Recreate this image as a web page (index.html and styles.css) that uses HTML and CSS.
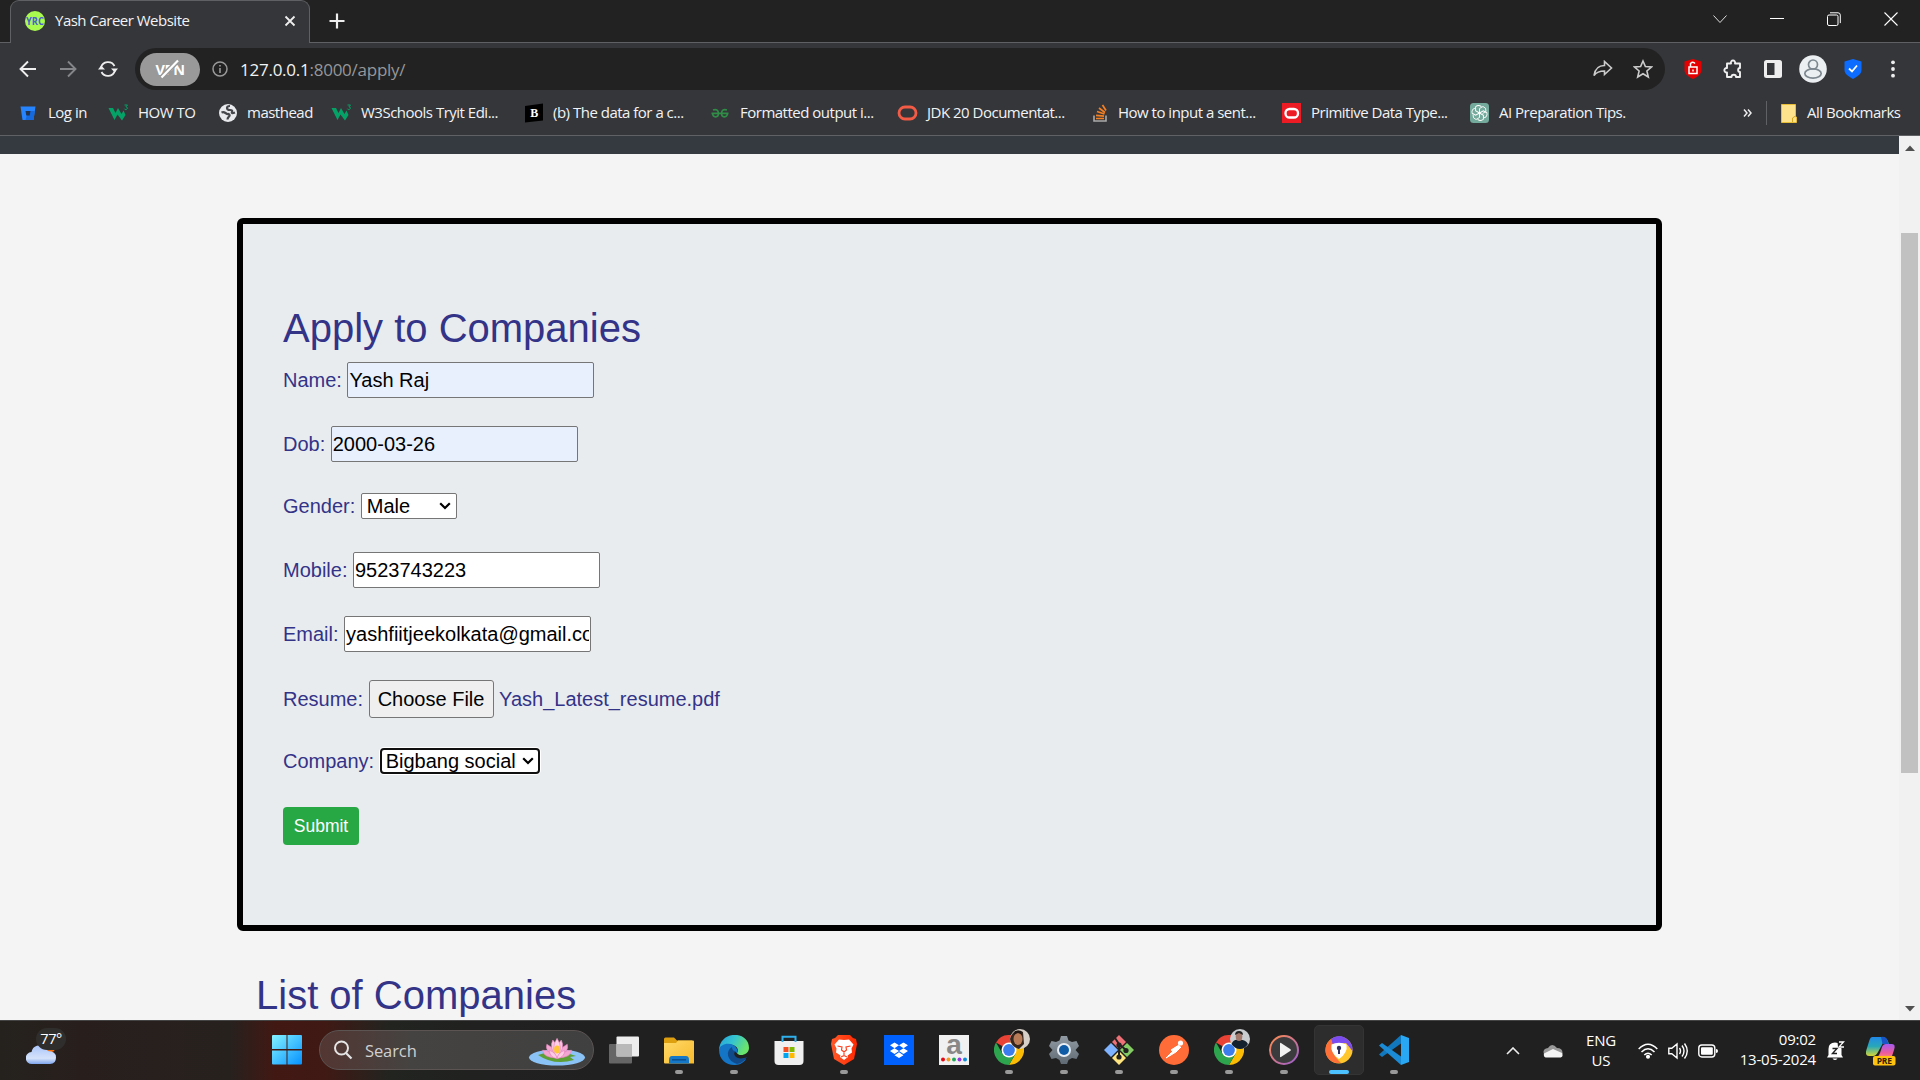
FILE: index.html
```html
<!DOCTYPE html>
<html lang="en">
<head>
<meta charset="utf-8">
<title>Yash Career Website</title>
<link rel="stylesheet" href="styles.css">
</head>
<body>
<svg class="defs" width="0" height="0">
  <defs>
    <linearGradient id="win" x1="0" y1="0" x2="1" y2="1"><stop offset="0" stop-color="#84f3ff"/><stop offset="1" stop-color="#0591ff"/></linearGradient>
    <linearGradient id="cloud" x1="0" y1="0" x2="0" y2="1"><stop offset="0" stop-color="#a9c5fa"/><stop offset=".7" stop-color="#d5e2fa"/><stop offset="1" stop-color="#7ea6ee"/></linearGradient>
    <linearGradient id="folder" x1="0" y1="0" x2="1" y2="1"><stop offset="0" stop-color="#ffd968"/><stop offset="1" stop-color="#f8ba2c"/></linearGradient>
    <linearGradient id="edge" x1="0" y1="0" x2="1" y2=".4"><stop offset="0" stop-color="#249fde"/><stop offset=".5" stop-color="#35c4d0"/><stop offset="1" stop-color="#6be46c"/></linearGradient>
    <linearGradient id="brave" x1="0" y1="0" x2="1" y2="0"><stop offset="0" stop-color="#ff5a2a"/><stop offset="1" stop-color="#ff2800"/></linearGradient>
    <linearGradient id="player" x1="0" y1="0" x2="1" y2="1"><stop offset="0" stop-color="#ff8c4c"/><stop offset="1" stop-color="#9a5ed0"/></linearGradient>
    <linearGradient id="gear" x1="0" y1="0" x2="0" y2="1"><stop offset="0" stop-color="#929ba3"/><stop offset="1" stop-color="#5f6a74"/></linearGradient>
    <linearGradient id="copA" x1="0" y1="0" x2="0" y2="1"><stop offset="0" stop-color="#2189e8"/><stop offset=".5" stop-color="#29a8b8"/><stop offset="1" stop-color="#d6d636"/></linearGradient>
    <linearGradient id="copB" x1="0" y1="0" x2="0" y2="1"><stop offset="0" stop-color="#a55bf0"/><stop offset=".6" stop-color="#ee5b9d"/><stop offset="1" stop-color="#ff9a60"/></linearGradient>
    <symbol id="w3" viewBox="0 0 20 20">
      <path d="M.5 5H5l2.500 5L10 5l3.500 6 2-3.500L17.500 12 14 17.500l-4.500-6-3 5.500z" fill="#04a267"/>
      <path d="M16.500 2h3l-1.600 1.800c2 0 2 2.700-.1 2.700-.8 0-1.300-.3-1.400-.8" fill="none" stroke="#04a267"/>
    </symbol>
    <symbol id="chrome" viewBox="0 0 30 30">
      <path d="M15 15L2 7.500A15 15 0 0 1 28 7.500H15z" fill="#ea4335"/>
      <path d="M15 7.500h13A15 15 0 0 1 15 30l6.500-11.300z" fill="#fbbc05"/>
      <path d="M2 7.500A15 15 0 0 0 15 30l6.500-11.300L8.500 18.700z" fill="#2da44e"/>
      <circle cx="15" cy="15" r="7.500" fill="#fff"/><circle cx="15" cy="15" r="5.900" fill="#3b7ded"/>
    </symbol>
  </defs>
</svg>
<div class="screen">
  <header class="browser">
    <div class="tabstrip">
      <div class="tab">
        <svg class="favicon" width="20" height="20" viewBox="0 0 20 20"><circle cx="10" cy="10" r="10" fill="#a9fb4f"/><text x="1" y="14" textLength="18" lengthAdjust="spacingAndGlyphs" font-size="11" font-weight="bold" fill="#4a5ed0">YRC</text></svg>
        <span class="tab-title">Yash Career Website</span>
        <svg width="12" height="12" viewBox="0 0 12 12"><path d="M1.500 1.500l9 9M10.500 1.500l-9 9" stroke="#eee" stroke-width="1.800"/></svg>
      </div>
      <svg class="newtab" width="16" height="16" viewBox="0 0 16 16"><path d="M8 .5v15M.5 8h15" stroke="#eee" stroke-width="2.200"/></svg>
      <div class="window-buttons">
        <svg width="14" height="14" viewBox="0 0 14 14"><path d="M.5 3.500L7 10.500l6.500-7" fill="none" stroke="#ddd"/></svg>
        <svg width="14" height="14" viewBox="0 0 14 14"><path d="M0 6.500h14" stroke="#fff"/></svg>
        <svg width="14" height="14" viewBox="0 0 14 14" fill="none" stroke="#fff"><rect x=".5" y="3" width="10.500" height="10.500" rx="1.500"/><path d="M3 .8h8q2.300 0 2.300 2.300v8" /></svg>
        <svg width="14" height="14" viewBox="0 0 14 14"><path d="M.5.5l13 13M13.500.5l-13 13" stroke="#fff" stroke-width="1.100"/></svg>
      </div>
    </div>
    <div class="toolbar">
      <div class="nav">
        <svg width="18" height="18" viewBox="0 0 18 18" fill="none" stroke="#eee" stroke-width="1.900"><path d="M17 9H2M9 1.500L1.500 9 9 16.500"/></svg>
        <svg width="18" height="18" viewBox="0 0 18 18" fill="none" stroke="#85868a" stroke-width="1.900"><path d="M1 9h15M9 1.500L16.500 9 9 16.500"/></svg>
        <svg width="20" height="18" viewBox="0 0 20 18"><path d="M3 7.500A7.300 7.300 0 0 1 16.500 6M17 10.500A7.300 7.300 0 0 1 3.500 12" fill="none" stroke="#eee" stroke-width="1.800"/><path d="M13 8.500h7l-3.200 4zM0 9.500h7L3.200 5.500z" fill="#eee"/></svg>
      </div>
      <div class="address">
        <div class="vpn"><span>VPN</span><svg class="slash" width="24" height="20" viewBox="0 0 24 20"><path d="M3.500 18.500L20 1.500" stroke="#999" stroke-width="5"/><path d="M3.500 18.500L20 1.500" stroke="#fff" stroke-width="2.200"/></svg></div>
        <svg class="info" width="16" height="16" viewBox="0 0 16 16"><circle cx="8" cy="8" r="7" fill="none" stroke="#999" stroke-width="1.500"/><path d="M8 7v5M8 4v1.500" stroke="#999" stroke-width="1.600"/></svg>
        <span class="url">127.0.0.1<i>:8000/apply/</i></span>
        <svg class="share" width="20" height="18" viewBox="0 0 20 18"><path d="M1 15.500C2 9 6 5.500 11.500 5.500V1.500L18.500 8l-7 6.500V11C7 11 3.500 12 1 15.500z" fill="none" stroke="#ccc" stroke-width="1.600"/></svg>
        <svg width="20" height="20" viewBox="0 0 20 20"><path d="M10 2l2.400 5.500 6 .5-4.500 4 1.400 6-5.300-3.200L4.700 18l1.400-6L1.600 8l6-.5z" fill="none" stroke="#ccc" stroke-width="1.600"/></svg>
      </div>
      <div class="extensions">
        <svg width="18" height="20" viewBox="0 0 18 20"><path d="M9 0l8.500 2.500V11c0 4-4 7-8.500 9C4.500 18 .5 15 .5 11V2.500z" fill="#e40000"/><rect x="5" y="8" width="8" height="6.500" fill="none" stroke="#fff" stroke-width="1.500"/><path d="M6.500 8V4.500q2.500-2.500 4.500 0M9 10.500V12.500" fill="none" stroke="#fff" stroke-width="1.500"/></svg>
        <svg width="20" height="20" viewBox="0 0 20 20"><path d="M4 4.500h4C7 .5 13 .5 12 4.500h5V9c-2.500 0-2.500 4 0 4v5h-4c0-3-4.500-3-4.500 0H4v-4.500C.5 14 .5 8.500 4 9z" fill="none" stroke="#f0f0f0" stroke-width="1.900" stroke-linejoin="round"/></svg>
        <svg width="18" height="18" viewBox="0 0 18 18"><rect width="18" height="18" rx="2.500" fill="#eee"/><rect x="3" y="3" width="7.500" height="12" fill="#35363a"/></svg>
        <svg width="28" height="28" viewBox="0 0 28 28"><circle cx="14" cy="14" r="13.800" fill="#eceff1"/><circle cx="14" cy="9.500" r="4.500" fill="none" stroke="#7c8790" stroke-width="1.700"/><ellipse cx="14" cy="18.500" rx="8.200" ry="4.600" fill="none" stroke="#7c8790" stroke-width="1.700"/></svg>
        <svg width="18" height="20" viewBox="0 0 18 20"><path d="M9 0l8.500 2.500V11c0 4-4 6.500-8.500 9C4.500 17.500.5 15 .5 11V2.500z" fill="#0b6cff"/><path d="M5 9.500L8 12.500 13 6.500" fill="none" stroke="#fff" stroke-width="1.800"/></svg>
        <svg width="4" height="18" viewBox="0 0 4 18" fill="#eee"><circle cx="2" cy="2.300" r="1.900"/><circle cx="2" cy="9" r="1.900"/><circle cx="2" cy="15.700" r="1.900"/></svg>
      </div>
    </div>
    <div class="bookmarks">
      <div class="bm"><svg width="20" height="20" viewBox="0 0 20 20"><path d="M2.500 3.500h15L15.500 17h-11z" fill="#2684ff"/><path d="M10 8h6.800L15.500 17h-8z" fill="#1668dd"/><path d="M7.500 8h5l-.8 4.500H8.300z" fill="#23334d"/></svg><span>Log in</span></div>
      <div class="bm"><svg width="20" height="20"><use href="#w3"/></svg><span>HOW TO</span></div>
      <div class="bm"><svg width="20" height="20" viewBox="0 0 20 20"><circle cx="11" cy="10" r="9" fill="#e8eaed"/><path d="M4.500 9.500q2-1 4 .5t3 1q2 1 .5 2.500t-1.500 3M13 3q-3 0-3 2t3 2 2 2 3 .5" fill="none" stroke="#45474c" stroke-width="2.200"/></svg><span>masthead</span></div>
      <div class="bm"><svg width="20" height="20"><use href="#w3"/></svg><span>W3Schools Tryit Edi...</span></div>
      <div class="bm"><svg width="20" height="20" viewBox="0 0 20 20"><path d="M2 3l18-2.500v17L2 19.500z" fill="#000"/><text x="11" y="14.200" text-anchor="middle" class="serif-b" fill="#fff">B</text></svg><span>(b) The data for a c...</span></div>
      <div class="bm"><svg width="20" height="20" viewBox="0 0 20 20" fill="none" stroke="#2f8d46" stroke-width="1.700"><path d="M1.500 10.300h17M3 7q5-1.500 5.500 3c0 5-5.500 5-6 .5M17 7q-5-1.500-5.500 3c0 5 5.500 5 6 .5"/></svg><span>Formatted output i...</span></div>
      <div class="bm"><svg width="22" height="20" viewBox="0 0 22 20"><rect x="3" y="4" width="17" height="12" rx="6" fill="none" stroke="#f25b45" stroke-width="2.800"/></svg><span class="near">JDK 20 Documentat...</span></div>
      <div class="bm"><svg width="20" height="20" viewBox="0 0 20 20" fill="none"><path d="M6 12.500V18h12v-5.500" stroke="#aaa" stroke-width="1.600"/><path d="M8 15.500h8M8 12.300l8 .9M9 8.500l7.500 2.500M11 5l6 4.500M14.500 2l3.500 5.500" stroke="#f48024" stroke-width="1.700"/></svg><span>How to input a sent...</span></div>
      <div class="bm"><svg width="20" height="20" viewBox="0 0 20 20"><rect x="1" width="19" height="20" fill="#ed1c24"/><rect x="4.500" y="6" width="12.500" height="8.500" rx="4" fill="none" stroke="#fff" stroke-width="2.300"/></svg><span>Primitive Data Type...</span></div>
      <div class="bm"><svg width="20" height="20" viewBox="0 0 20 20"><rect x="1" width="19" height="20" rx="3.500" fill="#74aa9c"/><g fill="none" stroke="#fff" stroke-width=".9"><path id="petal" d="M10.500 10V5.500L14 3.500q3.500 1 3 5L13.500 10.500"/><path d="M10.500 10V5.500L14 3.500q3.500 1 3 5" transform="rotate(60 10.500 10)"/><path d="M10.500 10V5.500L14 3.500q3.500 1 3 5" transform="rotate(120 10.500 10)"/><path d="M10.500 10V5.500L14 3.500q3.500 1 3 5" transform="rotate(180 10.500 10)"/><path d="M10.500 10V5.500L14 3.500q3.500 1 3 5" transform="rotate(240 10.500 10)"/><path d="M10.500 10V5.500L14 3.500q3.500 1 3 5" transform="rotate(300 10.500 10)"/></g></svg><span>AI Preparation Tips.</span></div>
      <div class="more"><svg width="9" height="8" viewBox="0 0 9 8"><path d="M1 .5L4 4 1 7.500M5 .5L8 4 5 7.500" fill="none" stroke="#eee" stroke-width="1.500"/></svg></div>
      <div class="bm all"><svg width="16" height="19" viewBox="0 0 16 19"><path d="M.5.5h14V13h1v5.500H.5z" fill="#ffe38c" stroke="#e8bd38"/><path d="M11.500 18v-4l3-2" fill="none" stroke="#d8a81e"/></svg><span>All Bookmarks</span></div>
    </div>
  </header>

  <div class="viewport">
    <main class="page">
      <div class="navbar"></div>
      <section class="jumbotron">
        <h2>Apply to Companies</h2>
        <form class="form">
          <div class="row"><label>Name:</label><input class="auto" value="Yash Raj"></div>
          <div class="row"><label>Dob:</label><input class="auto" value="2000-03-26"></div>
          <div class="row short"><label>Gender:</label><span class="select gender">Male<svg width="12" height="8" viewBox="0 0 12 8"><path d="M1.200 1.200L6 6l4.800-4.800" fill="none" stroke="#000" stroke-width="2.200"/></svg></span></div>
          <div class="row"><label>Mobile:</label><input value="9523743223"></div>
          <div class="row"><label>Email:</label><input value="yashfiitjeekolkata@gmail.com"></div>
          <div class="row tall"><label>Resume:</label><button type="button" class="choose">Choose File</button><span>Yash_Latest_resume.pdf</span></div>
          <div class="row short"><label>Company:</label><span class="select company">Bigbang social<svg width="12" height="8" viewBox="0 0 12 8"><path d="M1.200 1.200L6 6l4.800-4.800" fill="none" stroke="#000" stroke-width="2.200"/></svg></span></div>
          <button type="button" class="submit">Submit</button>
        </form>
      </section>
      <h2 class="list-title">List of Companies</h2>
    </main>
    <div class="scrollbar">
      <svg width="10" height="6" viewBox="0 0 10 6"><path d="M0 6l5-5.500L10 6z" fill="#505050"/></svg>
      <div class="thumb"></div>
      <svg width="10" height="6" viewBox="0 0 10 6"><path d="M0 0l5 5.500L10 0z" fill="#505050"/></svg>
    </div>
  </div>

  <footer class="taskbar">
    <div class="weather">
      <svg width="30" height="22" viewBox="0 0 30 22"><circle cx="25" cy="5" r="4" fill="#f76b0a"/><path d="M6 21a6 6 0 0 1-.5-12A8 8 0 0 1 19 4.500q2.500 1 3 3.500 8 0 8 6.500 0 6.500-6 6.500z" fill="url(#cloud)"/></svg>
      <span class="temp">77°</span>
    </div>
    <svg class="start" width="30" height="30" viewBox="0 0 30 30"><path d="M0 1q0-1 1-1h13.500v14H0zM15.500 0H29q1 0 1 1v13H15.500zM0 15.500h14.500v14H1q-1 0-1-1zM15.500 15.500H30v13q0 1-1 1H15.500z" fill="url(#win)"/></svg>
    <div class="search">
      <svg width="20" height="20" viewBox="0 0 20 20"><circle cx="8.500" cy="8" r="6.500" fill="none" stroke="#e5e5e5" stroke-width="2"/><path d="M13 13l5.500 5.500" stroke="#e5e5e5" stroke-width="2.200"/></svg>
      <span>Search</span>
      <svg class="lotus" width="58" height="32" viewBox="0 0 58 32"><ellipse cx="29" cy="23.500" rx="28" ry="8" fill="#8cc3f7"/><path d="M10 21q18-7 38 1l-6 1 4 3q-20 6-36-5z" fill="#5d9e35"/><g transform="translate(4.400 3.500) scale(.85)" fill="#f3a6d2" stroke="#e684bd" stroke-width=".7"><path d="M29 24Q13 24 12 15q10 0 17 9zM29 24Q45 24 46 15q-10 0-17 9zM29 24Q14 17 17 8q10 5 12 16zM29 24Q44 17 41 8q-10 5-12 16z"/><path d="M29 24Q19 12 24 3q6 5 5 21zM29 24Q39 12 34 3q-6 5-5 21z" fill="#fac4e0"/><path d="M29 24Q21 13 29 1q8 12 0 23z" fill="#ffd0e6"/><path d="M29 25Q20 23 20 15q8 3 9 10zM29 25Q38 23 38 15q-8 3-9 10z" fill="#ffcae3"/></g><ellipse cx="29" cy="15.500" rx="3" ry="4" fill="#ffc63c"/></svg>
    </div>
    <div class="apps">
      <div class="app"><svg width="30" height="30" viewBox="0 0 30 30"><rect x="0" y="9" width="23" height="19.500" rx="1" fill="#666"/><rect x="7.500" y="1.500" width="22.500" height="20" rx="1" fill="#eee"/><path d="M7.500 9H23v12.500H7.500z" fill="#b9b9b9"/></svg></div>
      <div class="app on"><svg width="30" height="30" viewBox="0 0 30 30"><path d="M0 4q0-1.500 1.500-1.500H10l3 3h15V15H0z" fill="#dfa010"/><path d="M0 8h12l2-2.500h15q1 0 1 1v22H1q-1 0-1-1z" fill="url(#folder)"/><path d="M5 28.500V25q0-4 3-4h14q3 0 3 4v3.500z" fill="#1678c9"/><path d="M8 24.800h14" stroke="#0b4f91" stroke-width="1.500"/></svg></div>
      <div class="app on"><svg width="30" height="30" viewBox="0 0 30 30"><path d="M0 16C0-5 30-5 30 13c0 7-10 9-12 5 3-4-2-9-8-8C4 11 1 13 0 16z" fill="url(#edge)"/><path d="M0 15c1-7 14-9 18-1 2 4-1 5-2 2-4 5 2 10 8 9l3-1c-3 5-8 6-12 6C7 30 0 24 0 15z" fill="#1474c6"/><path d="M13 12c-7 4-5 14 5 17 5-1 8-4 10-7-9 4-15-1-12-6-2 0-3-2-3-4z" fill="#114a8b"/></svg></div>
      <div class="app"><svg width="30" height="30" viewBox="0 0 30 30"><path d="M.5 6h29v20q0 4-4 4h-21q-4 0-4-4z" fill="#f0f0f0"/><path d="M8.500 7V1.800h13V7" fill="none" stroke="#2fb0ec" stroke-width="2"/><path d="M9.500 12h5v5h-5z" fill="#f25022"/><path d="M15.500 12h5v5h-5z" fill="#7fba00"/><path d="M9.500 18h5v5h-5z" fill="#00a4ef"/><path d="M15.500 18h5v5h-5z" fill="#ffb900"/></svg></div>
      <div class="app on"><svg width="30" height="30" viewBox="0 0 30 30"><path d="M9 0h12l3 3 3 1 1 5-3 15-10 6-10-6L2 9l1-5 3-1z" fill="url(#brave)"/><path d="M10 4.500l5 .5 5-.5 4.500 5-2 4 .5 4-4.500 3 .5 1.500-4 3-4-3 .5-1.500L7 17.500l.5-4-2-4z" fill="#fff"/><path d="M8.500 11l4.500 1-.5 3 2.500 2 2.500-2-.5-3 4.500-1M15 17v3.500M12 22l3-1.500 3 1.500" fill="none" stroke="#ff4120" stroke-width="1.200"/></svg></div>
      <div class="app"><svg width="30" height="30" viewBox="0 0 30 30"><path d="M0 0h30v30H0z" fill="#0061fe"/><path d="M10.500 7.500L15 10.300l-4.500 2.900L6 10.300zM19.500 7.500l4.500 2.800-4.500 2.900-4.500-2.900zM10.500 13.200L15 16l-4.500 2.900L6 16zM19.500 13.200L24 16l-4.500 2.900L15 16zM15 17.300l4.500 2.900L15 23l-4.500-2.800z" fill="#fff"/></svg></div>
      <div class="app"><svg width="30" height="30" viewBox="0 0 30 30"><path d="M0 0h30v30H0z" fill="#f1f1f1"/><text x="15" y="18.500" text-anchor="middle" class="amazon">a</text><circle cx="4" cy="24.500" r="2" fill="#e50914"/><circle cx="9.500" cy="24.500" r="2" fill="#f49b20"/><circle cx="15" cy="24.500" r="2" fill="#21a75a"/><circle cx="20.500" cy="24.500" r="2" fill="#9238df"/><circle cx="26" cy="24.500" r="2" fill="#0f8dd9"/></svg></div>
      <div class="app on"><svg width="30" height="30"><use href="#chrome"/></svg><svg class="avatar" width="20" height="20" viewBox="0 0 20 20"><circle cx="10" cy="10" r="10" fill="#d6d0c8"/><path d="M1 7Q6-2 13 3l1 12-5 5Q1 18 0 10z" fill="#35261e"/><ellipse cx="8" cy="10" rx="4.500" ry="6" fill="#b87b58"/><path d="M4 6q4-4 8 0l-1-4H5z" fill="#1d1613"/></svg></div>
      <div class="app on"><svg width="30" height="30" viewBox="0 0 30 30"><path d="M12 1h6l1.500 4.500L23 7l4.500-1 2.500 5-3.500 4 3.500 4-2.500 5-4.500-1-3.500 2L18 29h-6l-1.500-4L7 23l-4.500 1L0 19l3.500-4L0 11l2.500-5L7 7l3.500-1.500z" fill="url(#gear)"/><circle cx="15" cy="15" r="7" fill="#e8eef4"/><circle cx="15" cy="15" r="5" fill="#0f5ba5"/></svg></div>
      <div class="app on"><svg width="30" height="30" viewBox="0 0 30 30"><path d="M15 0l7 7-7 7-7-7z" fill="#ee7177"/><path d="M23 8l7 7-7 7-7-7z" fill="#83cc64"/><path d="M7 8l7 7-7 7-7-7z" fill="#80b3ff"/><path d="M15 16l7 7-7 7-7-7z" fill="#ffe57f"/><path d="M11 3l4 6v14M15 9l7 6" fill="none" stroke="#222" stroke-width="2"/><circle cx="15" cy="10" r="2.600" fill="#222"/><circle cx="22" cy="15.500" r="2.600" fill="#222"/><circle cx="15" cy="22" r="2.600" fill="#222"/></svg></div>
      <div class="app on"><svg width="30" height="30" viewBox="0 0 30 30"><circle cx="15" cy="15" r="15" fill="#ff6c37"/><circle cx="21.500" cy="8" r="2.600" fill="#fff"/><path d="M20 10l-8 5 2 1-7 7 10-6 5-5M16 12l3 3" fill="#fff" stroke="#fff" stroke-width="1"/></svg></div>
      <div class="app on"><svg width="30" height="30"><use href="#chrome"/></svg><svg class="avatar" width="20" height="20" viewBox="0 0 20 20"><circle cx="10" cy="10" r="10" fill="#c9cdd0"/><path d="M1.500 15Q4 10 8 11q7-1 10 4-3 5-8 5t-8.500-5z" fill="#15202f"/><ellipse cx="9" cy="7.500" rx="3.300" ry="4.500" fill="#a2786a"/><path d="M5 6q0-4 4-4t4 4l-4-2z" fill="#222"/></svg></div>
      <div class="app on"><svg width="30" height="30" viewBox="0 0 30 30"><circle cx="15" cy="15" r="14" fill="#3b3b3e" stroke="url(#player)" stroke-width="2"/><path d="M11 8.500q0-1 1-.5l9.500 6.200q.8.800 0 1.600L12 22q-1 .5-1-.5z" fill="#f2f2f2"/></svg></div>
      <div class="app active"><svg width="28" height="28" viewBox="0 0 28 28"><circle cx="14" cy="14" r="13.500" fill="#ffc72c"/><path d="M6 3Q16-4 25 6q3 4 2.500 9L21 7 7 8z" fill="#7b4df0"/><path d="M6 3l2 6c-3 6 2 12 8 18Q2 28 .5 15 0 8 6 3z" fill="#ff7139"/><path d="M6.500 8.500Q14 5 21.500 8.500 23 17 14 23 5 17 6.500 8.500z" fill="#fff"/><circle cx="14" cy="12" r="2.200" fill="#303060"/><path d="M13 13h2v5h-2z" fill="#303060"/></svg></div>
      <div class="app on"><svg width="30" height="30" viewBox="0 0 30 30"><path d="M22 0l8 3v24l-8 3z" fill="#29a7f2"/><path d="M0 19.500L22 0v8.500L3 22z" fill="#1278be"/><path d="M0 10.500L3 8l19 13.500V30z" fill="#1b8bd6"/></svg></div>
    </div>
    <div class="tray">
      <svg class="t-up" width="14" height="8" viewBox="0 0 14 8"><path d="M1 7l6-6 6 6" fill="none" stroke="#eee" stroke-width="1.600"/></svg>
      <svg class="t-cloud" width="20" height="14" viewBox="0 0 20 14"><path d="M1 10Q-1 5 5 4q4-6 9 0 6 0 5.500 6z" fill="#999"/><path d="M1 9.500L10 5l9 4q2 4.500-3 4.500H4Q0 13.500 1 9.500z" fill="#f4f4f4"/></svg>
      <span class="lang">ENG<br>US</span>
      <svg class="t-wifi" width="20" height="16" viewBox="0 0 20 16" fill="none" stroke="#fff" stroke-width="1.500"><path d="M.7 6q9.300-9.500 18.600 0M3.500 9q6.500-6.500 13 0M6.300 12q3.700-3.500 7.400 0"/><circle cx="10" cy="13.700" r="1.300" fill="#fff"/></svg>
      <svg class="t-sound" width="20" height="18" viewBox="0 0 20 18" fill="none" stroke="#fff" stroke-width="1.400"><path d="M.8 6.300h3L9 2v14l-5.200-4.300h-3zM11.500 6q2 3 0 6M14 3.500q4 5.500 0 11M16.500 1.500q5.500 7.500 0 15"/></svg>
      <svg class="t-batt" width="20" height="14" viewBox="0 0 20 14"><rect x=".8" y="1" width="16" height="12" rx="3" fill="none" stroke="#fff" stroke-width="1.400"/><rect x="3" y="3.200" width="11.800" height="7.600" rx="1" fill="#fff"/><path d="M18 5q2 0 2 2t-2 2z" fill="#fff"/></svg>
      <span class="clock">09:02<br>13-05-2024</span>
      <svg class="t-bell" width="18" height="20" viewBox="0 0 18 20"><path d="M1.500 14V8q0-6.500 6.500-6.500T14.500 8v6l1.500 2.500H0zM5.500 17.500h5q-2.500 3-5 0z" fill="#fff"/><path d="M10.500 0H18v7h-7z" fill="#202020"/><path d="M5.500 7.500h4.500L5.500 12.500H10" fill="none" stroke="#222" stroke-width="1.400"/><path d="M12 1h4.500L12 6H17" fill="none" stroke="#fff" stroke-width="1.300"/></svg>
      <svg class="t-copilot" width="30" height="30" viewBox="0 0 30 30"><path d="M6 1h11q4 0 6 7l-6-1-5 9q-2 4-5 4H3q-5 0-2-8L3.500 4Q4.500 1 6 1z" fill="url(#copA)"/><path d="M15 1q5-1 6.500 4l1 3h-6z" fill="#1a55c8"/><path d="M20 8h6q4 0 2 6l-3 9H8q4-1 6-6l2-6q1-3 4-3z" fill="url(#copB)"/><rect x="7" y="20" width="22.500" height="9.500" rx="2" fill="#ffc20e"/><text x="18.200" y="28" text-anchor="middle" class="pre">PRE</text></svg>
    </div>
  </footer>
</div>
</body>
</html>
```
FILE: styles.css
```css
* { box-sizing: border-box; }
body { margin: 0; overflow: hidden; font-family: "Open Sans", "Noto Sans", sans-serif; }
svg { display: block; flex: none; }
.defs { position: absolute; }
.screen { width: 1920px; height: 1080px; display: flex; flex-direction: column; overflow: hidden; }

/* Browser chrome */
.browser { height: 136px; flex: none; background: #35363a; border-bottom: 1px solid #606164; color: #f1f3f4; }
.tabstrip { height: 43px; background: #222; border-bottom: 1px solid #5f6063; display: flex; padding-left: 10px; }
.tab { width: 300px; height: 43px; background: #35363a; border: 1px solid #5f6063; border-bottom: 0; border-radius: 9px 9px 0 0; display: flex; align-items: center; padding: 0 13px 2px 14px; gap: 10px; }
.favicon { overflow: visible; }
.tab-title { flex: 1; font-size: 15px; letter-spacing: -.5px; padding-bottom: 2px; }
.newtab { margin: 13px 0 0 19px; }
.window-buttons { margin-left: auto; display: flex; gap: 43px; padding: 12px 22px 0 0; }
.toolbar { height: 52px; display: flex; align-items: center; }
.nav { width: 135px; display: flex; gap: 21.500px; padding-left: 19px; align-items: center; }
.address { width: 1530px; height: 42px; background: #222; border-radius: 21px; display: flex; align-items: center; padding: 0 12px 0 5px; }
.vpn { width: 60px; height: 33px; border-radius: 17px; background: #999; display: grid; place-items: center; font-weight: bold; font-size: 14.500px; letter-spacing: -.4px; color: #fff; }
.vpn > * { grid-area: 1 / 1; }
.info { margin-left: 12px; }
.url { margin-left: 12px; flex: 1; font-size: 17px; letter-spacing: -.25px; }
.url i { font-style: normal; color: #95979a; }
.share { margin-right: 20px; }
.extensions { display: grid; grid-template-columns: repeat(6, 40px); place-items: center; padding-left: 7.500px; }
.bookmarks { height: 36px; display: grid; grid-template-columns: 90px 109px 114px 192px 187px 186px 192px 193px 188px 274px 23px 1fr; padding-left: 18px; align-items: center; }
.bm { display: flex; align-items: center; gap: 10px; font-size: 15px; letter-spacing: -.5px; white-space: nowrap; }
.bm span { padding-bottom: 2px; }
.near { margin-left: -1px; }
.all { height: 24px; border-left: 1px solid #606164; padding-left: 14px; }

/* Page */
.viewport { height: 884px; flex: none; display: flex; background: #f4f4f4; }
.page { width: 1899px; overflow: hidden; font-family: "Liberation Sans", Arial, sans-serif; font-size: 20px; color: #333388; }
.navbar { height: 18px; background: #343a40; }
.jumbotron { margin: 64px 0 0 237px; width: 1425px; height: 713px; background: #e9ecef; border: 6px solid #000; border-radius: 6px; padding: 80px 40px; }
h2 { margin: 0; font-size: 40px; font-weight: 400; line-height: 48px; }
.form { margin-top: 10px; }
.row { height: 36px; margin-bottom: 28px; display: flex; align-items: center; gap: 5.500px; white-space: nowrap; }
.short { height: 26px; margin-bottom: 33px; margin-top: 31px; }
.tall { height: 38px; margin-bottom: 30px; }
.row:has(+ .short) { margin-bottom: 0; }
.tall + .short { margin-top: 30px; }
input, .choose, .select { font: 20px "Liberation Sans", Arial, sans-serif; color: #000; border: 1px solid #767676; border-radius: 2px; background: #fff; }
input { width: 247px; height: 36px; padding: 1px; }
.auto { background: #e8f0fe; }
.choose { width: 125px; height: 38px; padding: 0; background: #efefef; border-radius: 3px; }
.select { height: 26px; display: flex; justify-content: space-between; align-items: center; padding: 0 5px; line-height: 22px; }
.gender { width: 96px; }
.company { width: 160px; border: 2px solid #101010; border-radius: 4px; padding: 0 4px; box-shadow: 0 0 0 1px #fff; }
.submit { display: block; width: 76px; height: 38px; border: 0; border-radius: 4px; background: #28a745; color: #fff; font: 17.500px "Liberation Sans", Arial, sans-serif; padding: 0; }
.list-title { margin: 40px 0 0 256px; }
.scrollbar { width: 21px; background: #f1f1f1; display: flex; flex-direction: column; align-items: center; padding: 9px 0 8px; }
.thumb { width: 17px; height: 540px; margin: 82px 0 auto; background: #c1c1c1; }

/* Taskbar */
.taskbar { height: 60px; flex: none; border-top: 1px solid #444; display: flex; background: linear-gradient(90deg, #25221e 0, #281f1d 80px, #27211e 230px, #421813 275px, #401914 325px, #222420 390px, #202120 500px, #202020 600px); color: #fff; }
.weather { width: 272px; padding: 22px 0 0 26px; position: relative; }
.temp { position: absolute; left: 36px; top: 7px; width: 30px; height: 22px; border-radius: 11px; background: #302e2c; text-align: center; font-size: 14.500px; line-height: 22px; letter-spacing: -.5px; }
.start { margin-top: 14px; }
.search { width: 275px; height: 40px; margin: 9px 0 0 17px; border: 1px solid #5b5453; border-radius: 20px; background: linear-gradient(90deg, #533632, #454341 90px, #404040); display: flex; align-items: center; padding: 0 7px 0 13px; gap: 12px; color: #d0d0d0; font-size: 16.500px; letter-spacing: -.1px; }
.lotus { margin-left: auto; }
.apps { display: flex; margin-left: 2.500px; padding-top: 4px; }
.app { width: 50px; height: 50px; margin: 0 2.500px; display: grid; place-items: center; position: relative; }
.on::after, .active::after { content: ""; position: absolute; left: 21px; bottom: 1px; width: 8px; height: 4px; border-radius: 2px; background: #999; }
.active { background: #2d2d2d; border: 1px solid #343434; border-radius: 5px; }
.active::after { left: 14px; bottom: 0; width: 20px; background: #4cc2ff; }
.avatar { position: absolute; left: 26px; top: 4px; }
.tray { margin-left: auto; width: 414px; display: flex; align-items: center; font-size: 15px; line-height: 20px; letter-spacing: -.2px; }
.lang { width: 44px; margin-left: 16px; text-align: center; padding-bottom: 2px; }
.t-wifi { margin-left: 15px; }
.t-sound, .t-batt { margin-left: 10px; }
.clock { width: 98px; text-align: right; padding-bottom: 3px; }
.t-cloud { margin-left: 23px; }
.t-bell { margin-left: 11px; }
.t-copilot { margin-left: 21px; }
.amazon { font: bold 28px "Liberation Sans", sans-serif; fill: #888; }
.pre { font: bold 8.500px "Open Sans", sans-serif; fill: #302000; }
.serif-b { font: bold 12px "Liberation Serif", serif; }
```
